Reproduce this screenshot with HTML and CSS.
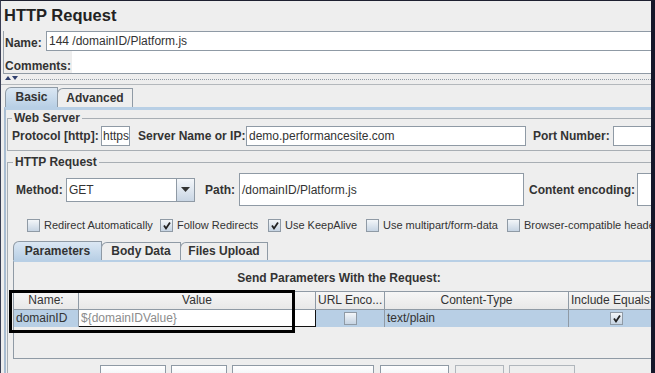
FILE: index.html
```html
<!DOCTYPE html>
<html lang="en">
<head>
  <meta charset="UTF-8">
  <title>HTTP Request</title>
  <link rel="stylesheet" href="styles.css">
</head>
<body>
  <div class="frame">
    <div class="content">
      <h1 class="title">HTTP Request</h1>

      <!-- name / comments -->
      <div class="meta">
        <div class="meta-row name-row">
          <span class="meta-label name-label">Name:</span>
          <div class="text-field name-field">144 /domainID/Platform.js</div>
        </div>
        <div class="meta-row comments-row">
          <span class="meta-label comments-label">Comments:</span>
          <div class="comments-field"></div>
        </div>
      </div>

      <div class="splitter">
        <span class="arrow-up"></span>
        <span class="arrow-down"></span>
        <span class="dots"></span>
      </div>

      <div class="tabs main-tabs">
        <div class="tab tab-basic selected">Basic</div>
        <div class="tab tab-advanced">Advanced</div>
      </div>

      <div class="tab-panel">
        <fieldset class="group web-server">
          <legend>Web Server</legend>
          <div class="form-row server-row">
            <span class="field-label protocol-label">Protocol [http]:</span>
            <div class="text-field protocol-field">https</div>
            <span class="field-label server-label">Server Name or IP:</span>
            <div class="text-field server-field">demo.performancesite.com</div>
            <span class="field-label port-label">Port Number:</span>
            <div class="text-field port-field"></div>
          </div>
        </fieldset>

        <fieldset class="group http-request">
          <legend>HTTP Request</legend>
          <div class="form-row method-row">
            <span class="field-label method-label">Method:</span>
            <div class="combo">
              <span class="combo-value">GET</span>
              <span class="combo-arrow">
                <svg width="9" height="5" viewBox="0 0 9 5"><path d="M0 0h9L4.5 5z" fill="#333"/></svg>
              </span>
            </div>
            <span class="field-label path-label">Path:</span>
            <div class="text-field path-field">/domainID/Platform.js</div>
            <span class="field-label encoding-label">Content encoding:</span>
            <div class="text-field encoding-field"></div>
          </div>

          <div class="check-row">
            <label class="check-item item-redirect">
              <span class="check"></span>Redirect Automatically
            </label>
            <label class="check-item item-follow">
              <span class="check"><svg width="11" height="11" viewBox="0 0 11 11"><path d="M3 5.5 5 8.5 9 2.5" fill="none" stroke="#222" stroke-width="1.8"/></svg></span>Follow Redirects
            </label>
            <label class="check-item item-keepalive">
              <span class="check"><svg width="11" height="11" viewBox="0 0 11 11"><path d="M3 5.5 5 8.5 9 2.5" fill="none" stroke="#222" stroke-width="1.8"/></svg></span>Use KeepAlive
            </label>
            <label class="check-item item-multipart">
              <span class="check"></span>Use multipart/form-data
            </label>
            <label class="check-item item-browser">
              <span class="check"></span>Browser-compatible headers
            </label>
          </div>

          <div class="tabs inner-tabs">
            <div class="tab tab-params selected">Parameters</div>
            <div class="tab tab-body">Body Data</div>
            <div class="tab tab-files">Files Upload</div>
          </div>

          <div class="params-panel">
            <div class="params-title">Send Parameters With the Request:</div>
            <div class="params-table">
              <div class="th">Name:</div>
              <div class="th">Value</div>
              <div class="th th-left">URL Enco...</div>
              <div class="th">Content-Type</div>
              <div class="th th-left">Include Equals?</div>

              <div class="td">domainID</div>
              <div class="td td-edit">${domainIDValue}</div>
              <div class="td td-center"><span class="check"></span></div>
              <div class="td">text/plain</div>
              <div class="td td-center"><span class="check"><svg width="11" height="11" viewBox="0 0 11 11"><path d="M3 5.5 5 8.5 9 2.5" fill="none" stroke="#222" stroke-width="1.8"/></svg></span></div>
            </div>
          </div>

          <div class="button-row">
            <button class="btn btn-detail">Detail</button>
            <button class="btn btn-add">Add</button>
            <button class="btn btn-clipboard">Add from Clipboard</button>
            <button class="btn btn-delete">Delete</button>
            <button class="btn btn-up" disabled>Up</button>
            <button class="btn btn-down" disabled>Down</button>
          </div>
        </fieldset>
      </div>
    </div>

    <!-- annotation box drawn over the table -->
    <div class="highlight"></div>
  </div>
</body>
</html>
```

FILE: styles.css
```css
* {
  box-sizing: border-box;
  margin: 0;
  padding: 0;
}

body {
  background: #eeeeee;
  font-family: 'Liberation Sans', Arial, sans-serif;
  font-size: 12px;
  color: #333;
}

.frame {
  position: relative;
  width: 655px;
  height: 373px;
  overflow: hidden;
  background: #eeeeee;
  border-top: 1px solid #1e2030;
  border-left: 1px solid #3a3f55;
  border-right: 4px solid #15172a;
}

/* wider than the window, the right side gets clipped */
.content {
  width: 674px;
}

.title {
  height: 30px;
  padding: 4px 0 6px 3px;
  font-size: 16.5px;
  line-height: 20px;
  font-weight: bold;
  color: #222;
}

/* name + comments */
.meta {
  margin-left: 2px;
  border-left: 1px solid #9aa3ac;
}

.meta-row {
  display: flex;
}

.meta-label {
  font-weight: bold;
  line-height: 14px;
}

.name-row {
  height: 20px;
  align-items: center;
}

.name-label {
  width: 42px;
  padding: 3px 0 0 1px;
}

.text-field {
  height: 20px;
  border: 1px solid #8f9aa5;
  background: #fff;
  padding: 1px 2px 0;
  line-height: 17px;
  white-space: nowrap;
  overflow: hidden;
}

.name-field {
  flex: 1;
}

.comments-row {
  height: 23px;
  border-bottom: 1px solid #8f9aa5;
}

.comments-label {
  width: 68px;
  padding: 8px 0 0 1px;
}

.comments-field {
  flex: 1;
  background: #fff;
}

.splitter {
  display: flex;
  align-items: flex-start;
  height: 11px;
  padding: 2px 0 0 4px;
  border-bottom: 1px solid #b4b8bc;
}

.arrow-up {
  width: 0;
  height: 0;
  border-left: 3px solid transparent;
  border-right: 3px solid transparent;
  border-bottom: 4px solid #2f3f6e;
  margin-right: 1px;
}

.arrow-down {
  width: 0;
  height: 0;
  border-left: 3px solid transparent;
  border-right: 3px solid transparent;
  border-top: 4px solid #2f3f6e;
}

.dots {
  flex: 1;
  margin: 3px 0 0 3px;
  border-top: 1px dotted #8f9aa5;
}

/* tabs */
.tabs {
  display: flex;
  align-items: flex-end;
}

.tab {
  height: 19px;
  border: 1px solid #8f9aa5;
  border-bottom: none;
  border-top-left-radius: 6px;
  font-weight: bold;
  line-height: 18px;
  text-align: center;
  background: #eeeeee;
}

.tab.selected {
  background: linear-gradient(#dbe7f3, #b8cfe5);
}

.main-tabs {
  height: 20px;
  margin-top: 2px;
  padding-left: 4px;
}

.tab-basic {
  width: 53px;
  height: 20px;
  line-height: 19px;
}

.tab-advanced {
  width: 76px;
  margin-left: -1px;
}

.tab-panel {
  margin-left: 3px;
  border-left: 2px solid #a9bdd2;
  border-top: 3px solid #b8cfe5;
}

/* titled groups */
.group {
  min-width: 0;
  margin: 1px 0 0 1px;
  border: 1px solid #a8aeb4;
}

.group legend {
  padding: 0 2px;
  font-weight: bold;
  line-height: 14px;
}

.web-server {
  padding: 0 10px 4px 4px;
}

.http-request {
  margin-top: 4px;
  padding: 0 10px 0 5px;
}

.form-row {
  display: flex;
  align-items: center;
}

.field-label {
  font-weight: bold;
  white-space: nowrap;
}

.server-row {
  height: 20px;
  margin-top: 1px;
}

.protocol-label { width: 89px; }
.protocol-field { width: 29px; padding-left: 1px; margin-right: 8px; }
.server-label { width: 108px; }
.server-field { width: 280px; }
.port-label { width: 80px; margin-left: 7px; }
.port-field { flex: 1; }

.method-row {
  height: 33px;
  margin: 4px 0 0 3px;
}

.method-label { width: 50px; }

.combo {
  display: flex;
  width: 129px;
  height: 24px;
  border: 1px solid #8f9aa5;
  background: #fff;
}

.combo-value {
  flex: 1;
  padding-left: 2px;
  line-height: 22px;
}

.combo-arrow {
  display: flex;
  align-items: center;
  justify-content: center;
  width: 18px;
  border-left: 1px solid #8f9aa5;
  background: linear-gradient(#f4f7fa, #c9d6e4);
}

.path-label { width: 34px; margin-left: 10px; }

.path-field {
  width: 285px;
  height: 33px;
  line-height: 30px;
}

.encoding-label { width: 108px; margin-left: 5px; }

.encoding-field {
  flex: 1;
  height: 33px;
}

/* checkboxes */
.check-row {
  display: flex;
  align-items: center;
  height: 24px;
  margin: 7px 0 0 14px;
  font-size: 11px;
}

.check-item {
  display: flex;
  align-items: center;
  white-space: nowrap;
}

.item-redirect { width: 133px; }
.item-follow { width: 108px; }
.item-keepalive { width: 98px; }
.item-multipart { width: 141px; }

.check {
  display: flex;
  align-items: center;
  justify-content: center;
  width: 13px;
  height: 13px;
  margin-right: 4px;
  border: 1px solid #8f9aa5;
  background: linear-gradient(#f3f6f9, #c6d4e3);
}

/* inner tabs */
.inner-tabs {
  height: 19px;
  margin-top: 4px;
}

.inner-tabs .tab {
  height: 18px;
  line-height: 17px;
}

.inner-tabs .tab.selected {
  height: 19px;
  line-height: 18px;
}

.tab-params { width: 89px; }
.tab-body { width: 80px; margin-left: -1px; }
.tab-files { width: 88px; margin-left: -1px; }

.params-panel {
  height: 99px;
  border-left: 1px solid #8f9aa5;
  border-top: 2px solid #b8cfe5;
  border-bottom: 1px solid #8f9aa5;
}

.params-title {
  padding-top: 9px;
  font-weight: bold;
  line-height: 14px;
  text-align: center;
}

.params-table {
  display: grid;
  grid-template-columns: 65px 237px 69px 184px 1fr;
  grid-template-rows: 19px 17px;
  margin-top: 6px;
}

.th {
  border-top: 1px solid #8f9aa5;
  border-bottom: 1px solid #8f9aa5;
  border-right: 1px solid #8f9aa5;
  background: linear-gradient(#f6f6f6, #e8e8e8);
  line-height: 17px;
  text-align: center;
  white-space: nowrap;
  overflow: hidden;
}

.th-left {
  text-align: left;
  padding-left: 2px;
}

.td {
  background: #b8cfe5;
  border-right: 1px solid #8f9aa5;
  padding-left: 2px;
  line-height: 17px;
  white-space: nowrap;
  overflow: hidden;
}

.td-edit {
  background: #fff;
  border-right: 1px solid #111;
  border-bottom: 1px solid #111;
  color: #8c8c8c;
  line-height: 16px;
}

.td-center {
  display: flex;
  align-items: center;
  justify-content: center;
  padding-left: 0;
}

.td-center .check {
  margin-right: 0;
}

/* buttons under the table, only their top edge is in view */
.button-row {
  display: flex;
  gap: 5px;
  margin-top: 6px;
  padding-left: 87px;
}

.btn {
  height: 25px;
  border: 1px solid #8f9aa5;
  background: linear-gradient(#ffffff, #dde4ec);
  font-family: 'Liberation Sans', Arial, sans-serif;
  font-size: 12px;
  font-weight: bold;
  color: #333;
  padding-top: 20px;
  line-height: 14px;
  overflow: hidden;
}

.btn:disabled {
  background: #eeeeee;
  border-color: #b0b6bc;
  color: #999;
}

.btn-detail { width: 66px; }
.btn-add { width: 56px; }
.btn-clipboard { width: 142px; }
.btn-delete { width: 69px; margin-left: 1px; }
.btn-up { width: 49px; margin-left: 1px; }
.btn-down { width: 66px; }

.highlight {
  position: absolute;
  left: 8px;
  top: 289px;
  width: 286px;
  height: 43px;
  border: 3px solid #000;
}
```
